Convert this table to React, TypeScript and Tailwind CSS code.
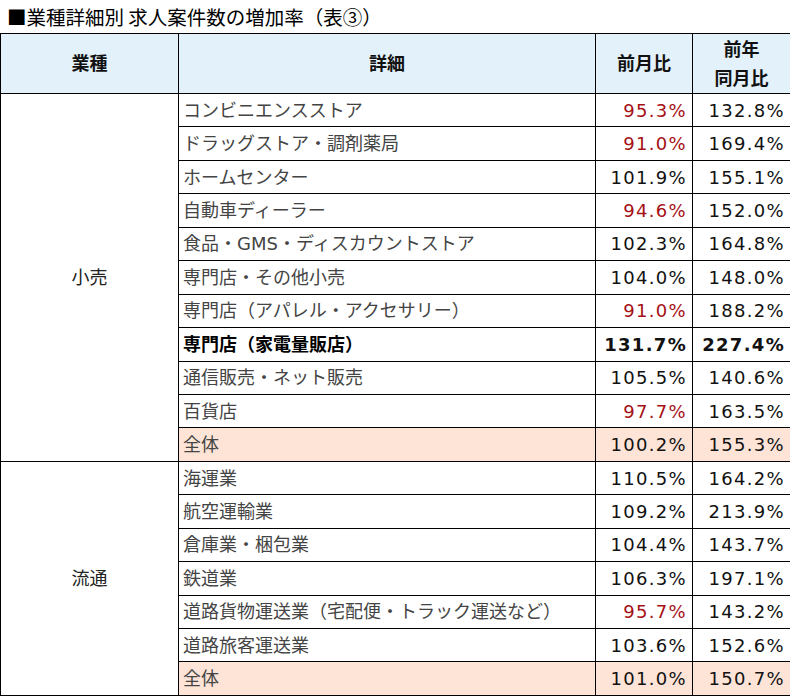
type Row = { name: string; m: string; y: string; red?: boolean; bold?: boolean; total?: boolean };

const retail: Row[] = [
  { name: "コンビニエンスストア", m: "95.3%", y: "132.8%", red: true },
  { name: "ドラッグストア・調剤薬局", m: "91.0%", y: "169.4%", red: true },
  { name: "ホームセンター", m: "101.9%", y: "155.1%" },
  { name: "自動車ディーラー", m: "94.6%", y: "152.0%", red: true },
  { name: "食品・GMS・ディスカウントストア", m: "102.3%", y: "164.8%" },
  { name: "専門店・その他小売", m: "104.0%", y: "148.0%" },
  { name: "専門店（アパレル・アクセサリー）", m: "91.0%", y: "188.2%", red: true },
  { name: "専門店（家電量販店）", m: "131.7%", y: "227.4%", bold: true },
  { name: "通信販売・ネット販売", m: "105.5%", y: "140.6%" },
  { name: "百貨店", m: "97.7%", y: "163.5%", red: true },
  { name: "全体", m: "100.2%", y: "155.3%", total: true },
];

const logistics: Row[] = [
  { name: "海運業", m: "110.5%", y: "164.2%" },
  { name: "航空運輸業", m: "109.2%", y: "213.9%" },
  { name: "倉庫業・梱包業", m: "104.4%", y: "143.7%" },
  { name: "鉄道業", m: "106.3%", y: "197.1%" },
  { name: "道路貨物運送業（宅配便・トラック運送など）", m: "95.7%", y: "143.2%", red: true },
  { name: "道路旅客運送業", m: "103.6%", y: "152.6%" },
  { name: "全体", m: "101.0%", y: "150.7%", total: true },
];

const font = { fontFamily: '"DejaVu Sans", "Noto Sans CJK JP", sans-serif' };
const cjk = { fontFamily: '"Noto Sans CJK JP", sans-serif' };

function Group({ label, rows }: { label: string; rows: Row[] }) {
  return (
    <>
      {rows.map((r, i) => (
        <tr key={r.name + i} className="h-[33.45px]">
          {i === 0 && (
            <td rowSpan={rows.length} className="border border-black text-center align-middle text-[18px] text-[#222]">
              {label}
            </td>
          )}
          <td
            className={`border border-black pl-[4px] text-left text-[18px] whitespace-nowrap ${
              r.total ? "bg-[#fde4d7]" : ""
            } ${r.bold ? "font-bold text-black" : "text-[#444]"}`}
          >
            {r.name}
          </td>
          <td
            className={`border border-black pr-[5px] text-right text-[18px] tracking-[1.3px] ${
              r.total ? "bg-[#fde4d7]" : ""
            } ${r.red ? "text-[#a50f15]" : "text-[#111]"} ${r.bold ? "font-bold" : ""}`}
          >
            {r.m}
          </td>
          <td
            className={`border border-black pr-[5px] text-right text-[18px] tracking-[1.3px] text-[#111] ${
              r.total ? "bg-[#fde4d7]" : ""
            } ${r.bold ? "font-bold" : ""}`}
          >
            {r.y}
          </td>
        </tr>
      ))}
    </>
  );
}

export default function App() {
  return (
    <div className="w-[790px] h-[696px] bg-white overflow-hidden" style={font}>
      <div className="h-[33px] pl-[7px] flex items-center text-[19.5px] text-black" style={cjk}>
        ■業種詳細別 求人案件数の増加率（表③）
      </div>
      <table className="border-collapse table-fixed w-[790px]">
        <colgroup>
          <col className="w-[178px]" />
          <col className="w-[417px]" />
          <col className="w-[97px]" />
          <col className="w-[98px]" />
        </colgroup>
        <thead>
          <tr className="h-[60px] bg-[#e3f1fb] text-[18px] font-bold text-[#111]">
            <th className="border border-black">業種</th>
            <th className="border border-black">詳細</th>
            <th className="border border-black">前月比</th>
            <th className="border border-black leading-[29px]">
              前年
              <br />
              同月比
            </th>
          </tr>
        </thead>
        <tbody>
          <Group label="小売" rows={retail} />
          <Group label="流通" rows={logistics} />
        </tbody>
      </table>
    </div>
  );
}
